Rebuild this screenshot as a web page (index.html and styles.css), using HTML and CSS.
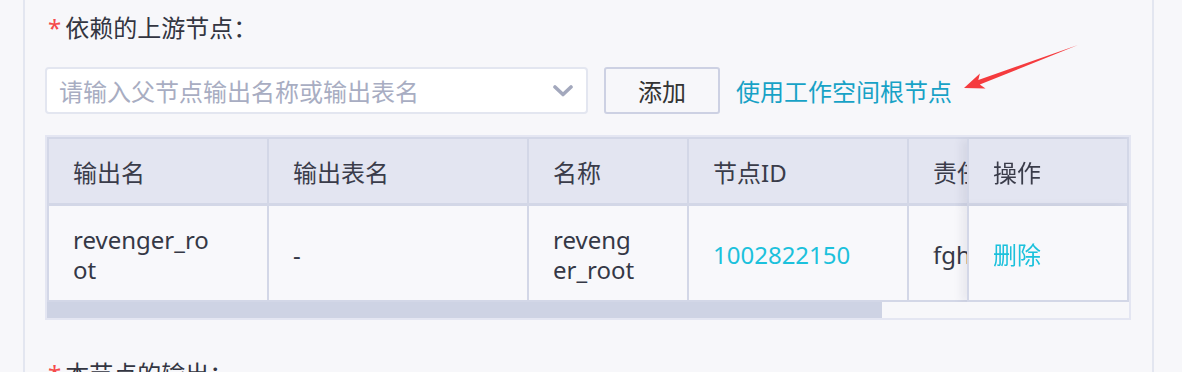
FILE: index.html
```html
<!DOCTYPE html>
<html lang="zh-CN">
<head>
    <meta charset="UTF-8">
    <meta name="viewport" content="width=device-width, initial-scale=1.0">
    <title>依赖的上游节点</title>
    <link rel="stylesheet" href="styles.css">
</head>
<body>

    <div class="page">
        <div class="panel">
            <div class="form-item">
                <div class="form-label"><span class="required">*</span>依赖的上游节点：</div>
                <div class="picker-row">
                    <div class="select">
                        <span class="placeholder">请输入父节点输出名称或输出表名</span>
                        <svg class="chevron" width="20" height="12" viewBox="0 0 20 12">
                            <path d="M2 2 L10 9.5 L18 2" fill="none" stroke="#a3a8bd" stroke-width="3.6" stroke-linecap="round" stroke-linejoin="round"/>
                        </svg>
                    </div>
                    <button class="btn">添加</button>
                    <a class="link" href="#">使用工作空间根节点</a>
                </div>
                <div class="table-wrap">
                    <div class="table-scroll">
                        <table class="dep-table">
                            <colgroup>
                                <col class="col-output">
                                <col class="col-table">
                                <col class="col-name">
                                <col class="col-id">
                                <col class="col-owner">
                                <col class="col-action">
                            </colgroup>
                            <thead>
                                <tr>
                                    <th>输出名</th>
                                    <th>输出表名</th>
                                    <th>名称</th>
                                    <th>节点ID</th>
                                    <th>责任人</th>
                                    <th class="fixed-right">操作</th>
                                </tr>
                            </thead>
                            <tbody>
                                <tr>
                                    <td>revenger_root</td>
                                    <td>-</td>
                                    <td>revenger_root</td>
                                    <td><a class="cell-link" href="#">1002822150</a></td>
                                    <td>fghadmin</td>
                                    <td class="fixed-right"><a class="cell-link" href="#">删除</a></td>
                                </tr>
                            </tbody>
                        </table>
                    </div>
                    <div class="scrollbar"><div class="thumb"></div></div>
                </div>
            </div>
            <div class="form-item">
                <div class="form-label"><span class="required">*</span>本节点的输出：</div>
            </div>
        </div>

        <svg class="note-arrow" width="1182" height="372" viewBox="0 0 1182 372">
            <polygon points="964,88 979.9,73.5 978.3,80 1078,45 979.8,84.6 985.5,88.5" fill="#f53b3e"/>
        </svg>
    </div>

</body>
</html>
```

FILE: styles.css
```css
* {
    box-sizing: border-box;
}

body {
    margin: 0;
    background: #f7f7fa;
    font-family: 'Noto Sans', 'Noto Sans CJK SC', sans-serif;
    color: #353846;
}

.page {
    position: relative;
    height: 372px;
    overflow: hidden;
}

.panel {
    margin-left: 23px;
    width: 1131px;
    min-height: 420px;
    border-left: 2px solid #e3e6f0;
    border-right: 2px solid #e3e6f0;
    padding: 10px 0 0 20px;
}

.form-item {
    margin-bottom: 36px;
}

.form-label {
    font-size: 24px;
    line-height: 36px;
    color: #333541;
    padding-left: 3px;
}

.required {
    color: #f54a4a;
    margin-right: 4px;
}

.picker-row {
    display: flex;
    align-items: center;
    margin-top: 21px;
    height: 47px;
}

.select {
    width: 543px;
    height: 47px;
    background: #fff;
    border: 2px solid #e3e6f0;
    border-radius: 4px;
    display: flex;
    align-items: center;
    justify-content: space-between;
    padding: 0 13px 0 12px;
}

.placeholder {
    font-size: 24px;
    color: #a8adc2;
    white-space: nowrap;
}

.chevron {
    flex: none;
}

.btn {
    margin-left: 16px;
    width: 116px;
    height: 47px;
    border: 2px solid #cdd1e3;
    border-radius: 3px;
    background: #f7f7fa;
    font-family: inherit;
    font-size: 24px;
    color: #333;
    padding: 0;
    cursor: pointer;
}

.link {
    margin-left: 16px;
    font-size: 24px;
    color: #17a2c6;
    text-decoration: none;
}

.table-wrap {
    margin-top: 21px;
    width: 1086px;
    border: 2px solid #e4e6f2;
}

.table-scroll {
    overflow: hidden;
}

.dep-table {
    width: 1402px;
    table-layout: fixed;
    border-collapse: separate;
    border-spacing: 0;
    border-left: 2px solid #d3d7e7;
    border-top: 2px solid #d3d7e7;
    font-size: 24px;
}

.col-output { width: 220px; }
.col-table { width: 260px; }
.col-name { width: 160px; }
.col-id { width: 220px; }
.col-owner { width: 378px; }
.col-action { width: 162px; }

.dep-table th,
.dep-table td {
    text-align: left;
    font-weight: normal;
    padding: 0 48px 0 24px;
    border-right: 2px solid #d3d7e7;
    border-bottom: 2px solid #d3d7e7;
}

.dep-table th {
    height: 67px;
    background: #e3e5f1;
    color: #3a3c4a;
    border-bottom-width: 3px;
    line-height: 32px;
    padding-top: 3px;
}

.dep-table td {
    height: 96px;
    background: #f8f8fb;
    line-height: 30px;
    word-break: break-all;
    padding-top: 3px;
}

.dep-table .fixed-right {
    position: sticky;
    right: 0;
    border-left: 2px solid #d3d7e7;
    padding-right: 10px;
    box-shadow: -6px 0 8px rgba(60, 64, 100, 0.08);
}

.cell-link {
    color: #1cc1dc;
    text-decoration: none;
}

.scrollbar {
    height: 16px;
    background: #f7f7fa;
}

.thumb {
    width: 835px;
    height: 100%;
    background: #ced3e4;
}

.note-arrow {
    position: absolute;
    left: 0;
    top: 0;
    pointer-events: none;
}
```
